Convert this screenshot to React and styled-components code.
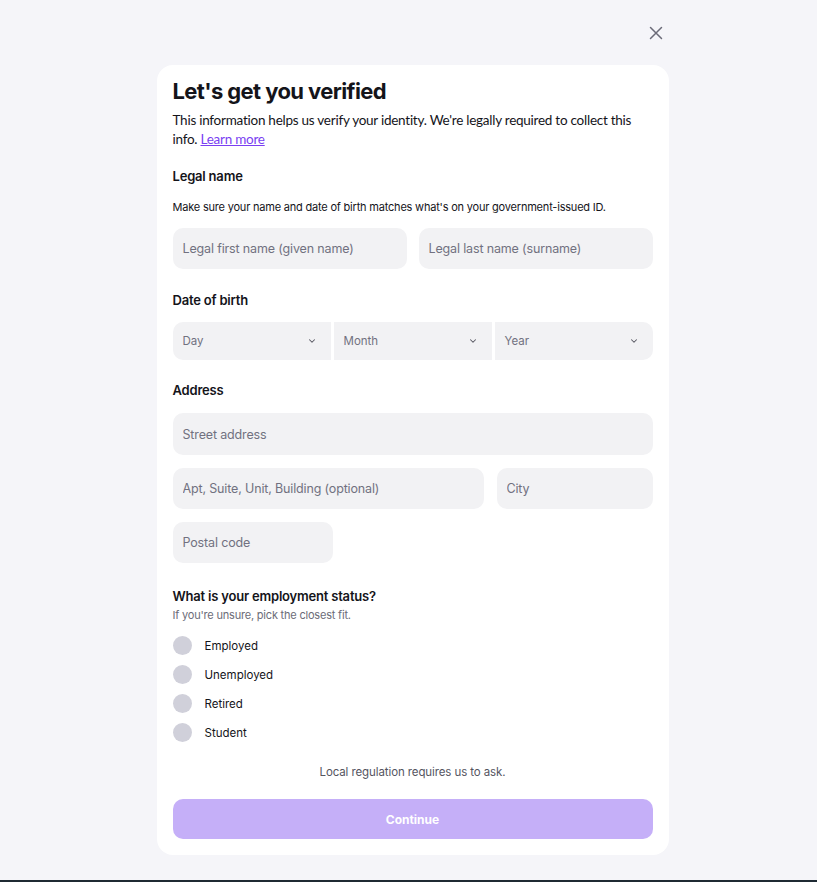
import styled, { createGlobalStyle } from "styled-components";

const GlobalStyle = createGlobalStyle`
    html, body {
        margin: 0;
        padding: 0;
        background-color: #f5f5f9;
        font-family: Inter, "Liberation Sans", sans-serif;
        color: #14141a;
    }
`

const Page = styled.div`
    display: flex;
    flex-direction: column;
    align-items: center;
    min-height: 882px;
    padding-left: 8px;
    box-sizing: border-box;
`

const TopBar = styled.div`
    width: 512px;
    height: 65px;
    display: flex;
    justify-content: flex-end;
    align-items: flex-start;
`

const CloseBtn = styled.button`
    border: none;
    background: none;
    padding: 0;
    margin-top: 25px;
    margin-right: 5px;
    width: 16px;
    height: 16px;
    color: #6b6b78;
    cursor: pointer;
`

const Card = styled.div`
    width: 512px;
    box-sizing: border-box;
    background-color: #fff;
    border-radius: 16px;
    padding: 11px 16px 16px;
    display: flex;
    flex-direction: column;
`

const Title = styled.h1`
    margin: 0;
    font-size: 22px;
    font-weight: 700;
    letter-spacing: -0.6px;
    line-height: 30px;
`

const Intro = styled.p`
    margin: 5px 0 0;
    font-family: Lato, Inter, sans-serif;
    font-size: 13.5px;
    letter-spacing: -0.25px;
    line-height: 19px;
    color: #14141a;
`

const Link = styled.a`
    color: #7a3ff2;
    text-decoration: underline;
`

const Label = styled.div`
    font-size: 13px;
    font-weight: 600;
    letter-spacing: -0.2px;
    margin-top: ${(p) => p.$top || 0}px;
`

const Helper = styled.div`
    font-size: 11px;
    letter-spacing: -0.2px;
    margin-top: ${(p) => p.$top || 0}px;
    color: ${(p) => p.$muted ? "#6c6c78" : "#14141a"};
`

const Row = styled.div`
    display: flex;
    gap: ${(p) => p.$gap}px;
    margin-top: ${(p) => p.$top}px;
`

const Field = styled.input`
    box-sizing: border-box;
    border: none;
    outline: none;
    background-color: #f2f2f4;
    border-radius: 10px;
    height: ${(p) => p.$h || 41}px;
    padding: 0 10px;
    font-family: inherit;
    font-size: 12.5px;
    letter-spacing: -0.15px;
    color: #14141a;
    width: ${(p) => p.$w ? p.$w + "px" : "auto"};
    flex: ${(p) => p.$w ? "none" : "1"};
    min-width: 0;

    &::placeholder {
        color: #717180;
    }
`

const SelectBox = styled.div`
    flex: 1;
    height: 38px;
    background-color: #f2f2f4;
    border-radius: ${(p) => p.$pos === "first" ? "10px 0 0 10px" : p.$pos === "last" ? "0 10px 10px 0" : "0"};
    display: flex;
    align-items: center;
    justify-content: space-between;
    padding: 0 14px 0 10px;
    font-size: 11.5px;
    color: #717180;
`

const RadioList = styled.div`
    display: flex;
    flex-direction: column;
    gap: 10px;
    margin-top: 14px;
`

const RadioRow = styled.label`
    display: flex;
    align-items: center;
    gap: 13px;
    font-size: 11.5px;
    color: #14141a;
`

const Dot = styled.span`
    width: 19px;
    height: 19px;
    border-radius: 50%;
    background-color: #d0d0da;
`

const Note = styled.div`
    text-align: center;
    font-size: 11.5px;
    letter-spacing: -0.1px;
    color: #55555f;
    margin-top: 23px;
`

const Continue = styled.button`
    margin-top: 20px;
    height: 40px;
    border: none;
    border-radius: 10px;
    background-color: #c5aff8;
    color: #fff;
    font-family: inherit;
    font-weight: 700;
    font-size: 12px;
`

const BottomEdge = styled.div`
    margin-top: auto;
    margin-left: -8px;
    width: calc(100% + 8px);
    height: 2px;
    background-color: #1f2a33;
`

const Chevron = () => (
    <svg width="10" height="10" viewBox="0 0 24 24" fill="none" stroke="#55555f" strokeWidth="2.5" strokeLinecap="round" strokeLinejoin="round">
        <path d="M6 9l6 6 6-6" />
    </svg>
)

const Select = ({ label, pos }) => (
    <SelectBox $pos={pos}>
        <span>{label}</span>
        <Chevron />
    </SelectBox>
)

const statuses = ["Employed", "Unemployed", "Retired", "Student"]

const App = () => {
    return (
        <Page>
            <GlobalStyle />
            <TopBar>
                <CloseBtn aria-label="Close">
                    <svg width="16" height="16" viewBox="0 0 16 16" fill="none" stroke="currentColor" strokeWidth="1.5" strokeLinecap="round">
                        <path d="M2.5 2.5l11 11M13.5 2.5l-11 11" />
                    </svg>
                </CloseBtn>
            </TopBar>
            <Card>
                <Title>Let's get you verified</Title>
                <Intro>
                    This information helps us verify your identity. We're legally required to collect this info. <Link href="#">Learn more</Link>
                </Intro>

                <Label $top={19}>Legal name</Label>
                <Helper $top={16}>Make sure your name and date of birth matches what's on your government-issued ID.</Helper>
                <Row $gap={12} $top={14}>
                    <Field placeholder="Legal first name (given name)" />
                    <Field placeholder="Legal last name (surname)" />
                </Row>

                <Label $top={23}>Date of birth</Label>
                <Row $gap={3} $top={14}>
                    <Select label="Day" pos="first" />
                    <Select label="Month" pos="mid" />
                    <Select label="Year" pos="last" />
                </Row>

                <Label $top={22}>Address</Label>
                <Row $gap={0} $top={15}>
                    <Field $h={42} placeholder="Street address" />
                </Row>
                <Row $gap={13} $top={13}>
                    <Field $w={311} placeholder="Apt, Suite, Unit, Building (optional)" />
                    <Field placeholder="City" />
                </Row>
                <Row $gap={0} $top={13}>
                    <Field $w={160} placeholder="Postal code" />
                </Row>

                <Label $top={25}>What is your employment status?</Label>
                <Helper $top={4} $muted>If you're unsure, pick the closest fit.</Helper>
                <RadioList>
                    {statuses.map((s) => (
                        <RadioRow key={s}>
                            <Dot />
                            {s}
                        </RadioRow>
                    ))}
                </RadioList>

                <Note>Local regulation requires us to ask.</Note>
                <Continue disabled>Continue</Continue>
            </Card>
            <BottomEdge />
        </Page>
    )
}

export default App;
